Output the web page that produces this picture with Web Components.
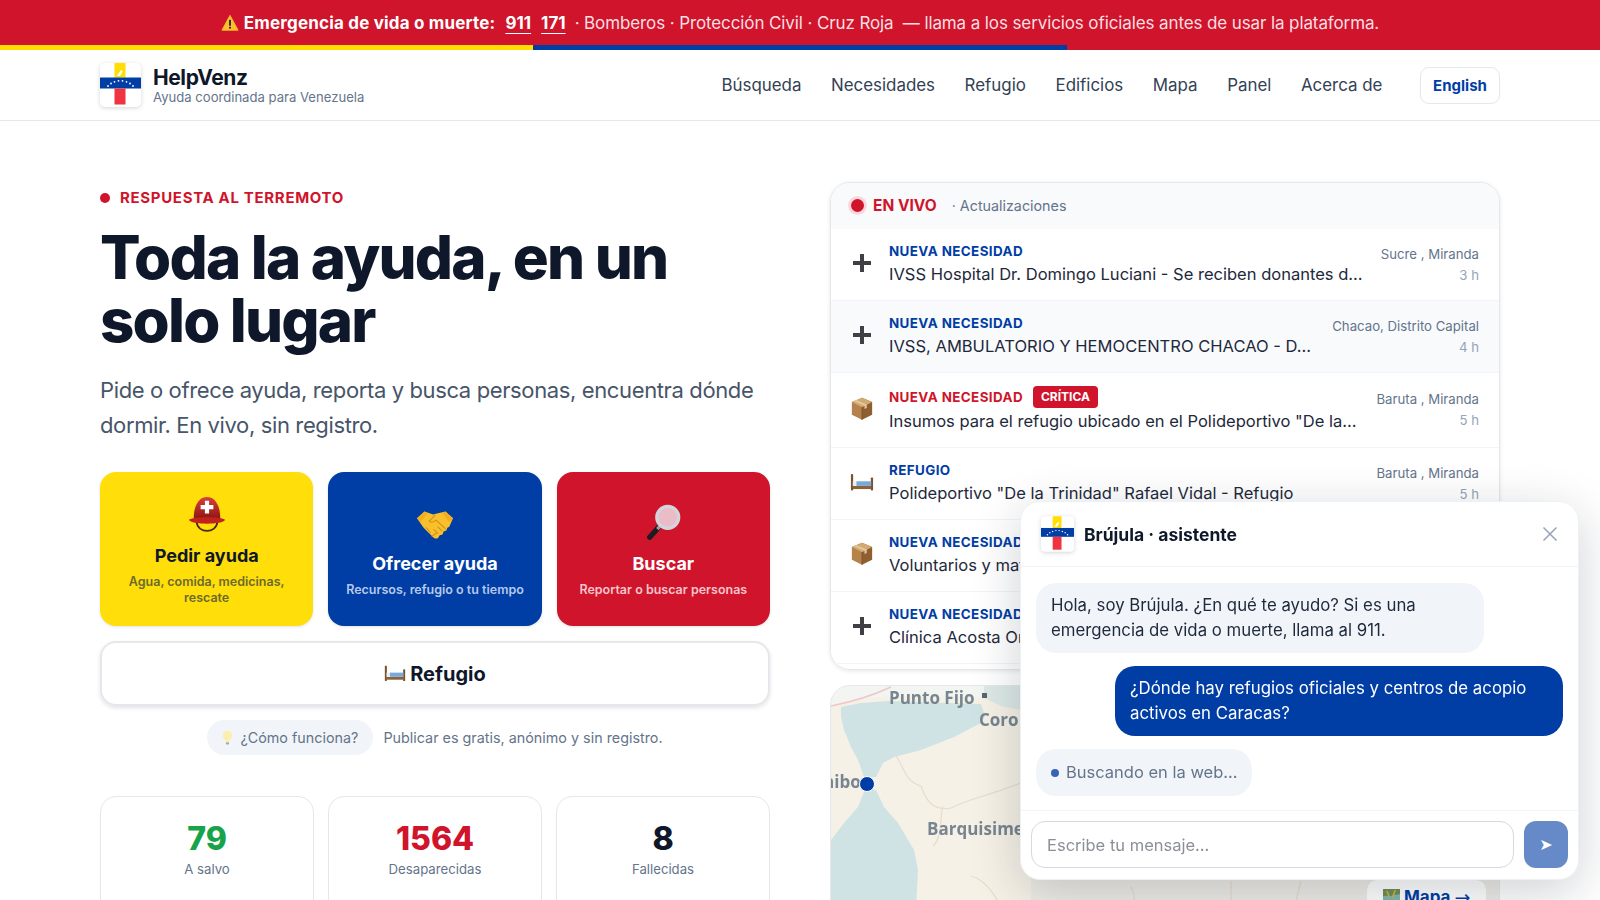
<!DOCTYPE html>
<html lang="es">
<head>
<meta charset="utf-8">
<title>HelpVenz</title>
<style>
  html, body { margin: 0; height: 100%; overflow: hidden; background: #fff; }
  body { font-family: Inter, "Liberation Sans", sans-serif; color: #0f172a; }
</style>
</head>
<body>
<sos-banner></sos-banner>
<site-header></site-header>
<hero-page>
  <hero-intro slot="left"></hero-intro>
  <live-feed slot="right">
    <feed-row icon="plus" label="NUEVA NECESIDAD" title="IVSS Hospital Dr. Domingo Luciani - Se reciben donantes d…" place="Sucre , Miranda" time="3 h"></feed-row>
    <feed-row icon="plus" shaded label="NUEVA NECESIDAD" title="IVSS, AMBULATORIO Y HEMOCENTRO CHACAO - D…" place="Chacao, Distrito Capital" time="4 h"></feed-row>
    <feed-row icon="box" critical label="NUEVA NECESIDAD" title="Insumos para el refugio ubicado en el Polideportivo &quot;De la…" place="Baruta , Miranda" time="5 h"></feed-row>
    <feed-row icon="bed" label="REFUGIO" title="Polideportivo &quot;De la Trinidad&quot; Rafael Vidal - Refugio" place="Baruta , Miranda" time="5 h"></feed-row>
    <feed-row icon="box" label="NUEVA NECESIDAD" title="Voluntarios y materiales" place="" time=""></feed-row>
    <feed-row icon="plus" label="NUEVA NECESIDAD" title="Clínica Acosta Ortiz" place="" time=""></feed-row>
  </live-feed>
  <map-card slot="right"></map-card>
</hero-page>
<chat-widget></chat-widget>

<script>
const ICONS = {
  warn: `<svg viewBox="0 0 20 20"><path d="M10 1.5 19 18H1Z" fill="#fbc02d" stroke="#fbc02d" stroke-linejoin="round"/><rect x="9" y="6.5" width="2" height="6.5" fill="#222"/><rect x="9" y="14.2" width="2" height="2" fill="#222"/></svg>`,
  helmet: `<svg viewBox="0 0 40 40"><defs><linearGradient id="h" x1="0" y1="0" x2="0" y2="1"><stop offset="0" stop-color="#d9413a"/><stop offset="1" stop-color="#8e1512"/></linearGradient></defs>
    <path d="M9 27c1 13 21 13 22 0" fill="none" stroke="#4a2c10" stroke-width="1.8"/>
    <path d="M6 24C6 9 12 1 20 1s14 8 14 23Z" fill="url(#h)"/>
    <path d="M1 25c3-3.500 35-3.500 38 0-2 5.500-36 5.500-38 0Z" fill="#c0231f"/>
    <path d="M17.800 5h4.400v4.500h4.500v4.400h-4.500v4.500h-4.400v-4.500h-4.500V9.500h4.500Z" fill="#fff"/></svg>`,
  hands: `<svg viewBox="0 0 40 40"><path d="M1 15 9 8l9 3 4-1 9-2 8 7-4 9-2 1-1 3-3 1-1 3-3 1-2 3c-2 1-4 0-5-1L8 25Z" fill="#f7c02c"/>
    <path d="M20 12l-6 6c2 2 5 1 7-1l10 9M17 34l5-4M23 31l-4-4M27 28l-4-4M11 25l4 5" fill="none" stroke="#d8901a" stroke-width="1.2" stroke-linecap="round"/>
    <path d="M1 15 9 8l3 2-7 9ZM39 15l-8-7-3 2 7 9Z" fill="#f3ae1e"/></svg>`,
  search: `<svg viewBox="0 0 40 40"><line x1="15" y1="25" x2="6" y2="35" stroke="#1d1d1f" stroke-width="5.500" stroke-linecap="round"/><line x1="19" y1="21" x2="14" y2="26.500" stroke="#9a9aa0" stroke-width="3.500"/>
    <circle cx="25" cy="14" r="11.500" fill="#e9bcc8" stroke="#d4d4db" stroke-width="3.500"/></svg>`,
  bed: `<svg viewBox="0 0 26 20"><rect x="1" y="1" width="2.400" height="18" rx=".8" fill="#7a5230"/><rect x="22.600" y="5" width="2.400" height="14" rx=".8" fill="#7a5230"/>
    <rect x="3" y="14" width="20" height="3.400" fill="#8d6238"/><path d="M3 9h5v5H3Z" fill="#e9eef2"/><path d="M7 9h16v5H7Z" fill="#7aa9d6"/></svg>`,
  box: `<svg viewBox="0 0 26 28"><path d="M13 1 25 6v15l-12 6Z" fill="#8f5f32"/><path d="M13 1 1 6v15l12 6Z" fill="#b5824b"/><path d="M1 6l12 6 12-6-12-5Z" fill="#d2a873"/>
    <path d="M13 12v15" stroke="#7b5028"/><path d="M6 3.600 18.600 9v4l-2.600 1.300V10.200L3.600 5Z" fill="#e3c79c"/></svg>`,
  plus: `<svg viewBox="0 0 18 18"><path d="M7 0h4v7h7v4h-7v7H7v-7H0V7h7Z" fill="#3f3f46"/></svg>`,
  bulb: `<svg viewBox="0 0 14 20"><path d="M7 1a6 6 0 0 0-3.400 10.900L5 15h4l1.400-3.100A6 6 0 0 0 7 1Z" fill="#fbeeb0"/><rect x="5" y="15.500" width="4" height="3" rx="1" fill="#a8a8a8"/></svg>`,
  map: `<svg viewBox="0 0 18 18"><rect width="18" height="18" fill="#7fb8b0"/><path d="M0 0h18v5c-3 2-5 0-8 2S4 6 0 8Z" fill="#6c8f57"/><path d="M4 2l3 7M13 1l-3 8" stroke="#d8b23a" stroke-width="1.600"/></svg>`
};

class AppIcon extends HTMLElement {
  connectedCallback() {
    const size = this.getAttribute("size") || 20;
    this.attachShadow({ mode: "open" }).innerHTML = `
      <style>
        :host { display: inline-flex; flex: none; width: ${size}px; }
        svg { display: block; width: 100%; height: auto; }
      </style>${ICONS[this.getAttribute("name")]}`;
  }
}
customElements.define("app-icon", AppIcon);

class BrandLogo extends HTMLElement {
  connectedCallback() {
    this.attachShadow({ mode: "open" }).innerHTML = `
      <style>
        :host { display: block; flex: none; width: var(--logo-w, 41px); height: var(--logo-h, 44px); }
        svg { display: block; width: 100%; height: 100%; filter: drop-shadow(0 1px 2px rgba(15,23,42,.18)); }
      </style>
      <svg viewBox="0 0 41 44">
        <rect width="41" height="44" rx="5" fill="#fff"/>
        <rect x="14.500" width="11" height="14.500" fill="#ffde00"/>
        <path d="M16.500 13c2-1 2-4 4.500-5.500 1-.6 2 .2 1.600 1-.8 1.500-1.600 3-2.600 4.500Z" fill="#fff"/>
        <rect y="14.500" width="41" height="11" fill="#003da5"/>
        <rect x="14.500" y="25.500" width="11" height="16" fill="#ef3340"/>
        <g fill="#fff"><circle cx="8" cy="23" r=".9"/><circle cx="11" cy="20.500" r=".9"/><circle cx="14.500" cy="18.800" r=".9"/><circle cx="18.500" cy="17.800" r=".9"/><circle cx="22.500" cy="17.800" r=".9"/><circle cx="26.500" cy="18.800" r=".9"/><circle cx="30" cy="20.500" r=".9"/><circle cx="33" cy="23" r=".9"/></g>
      </svg>`;
  }
}
customElements.define("brand-logo", BrandLogo);

class SosBanner extends HTMLElement {
  connectedCallback() {
    this.attachShadow({ mode: "open" }).innerHTML = `
      <style>
        :host { display: block; background: #cf142b; color: #fff; font-size: 17px; }
        .msg { height: 45px; display: flex; align-items: center; justify-content: center; white-space: nowrap; }
        app-icon { margin-right: 5px; }
        b { font-weight: 700; letter-spacing: .18px; }
        a { color: #fff; font-weight: 700; text-decoration: underline; text-underline-offset: 4px; margin-left: 10px; }
        .rest { color: #fbdfe2; margin-left: 9px; white-space: pre; letter-spacing: -.11px; }
        .stripe { display: flex; height: 5px; }
        .stripe i { flex: 1; }
      </style>
      <div class="msg">
        <app-icon name="warn" size="18"></app-icon>
        <b>Emergencia de vida o muerte:</b>
        <a>911</a><a>171</a>
        <span class="rest">· Bomberos · Protección Civil · Cruz Roja  — llama a los servicios oficiales antes de usar la plataforma.</span>
      </div>
      <div class="stripe"><i style="background:#ffde00"></i><i style="background:#003da5"></i><i></i></div>`;
  }
}
customElements.define("sos-banner", SosBanner);

class SiteHeader extends HTMLElement {
  connectedCallback() {
    const links = ["Búsqueda", "Necesidades", "Refugio", "Edificios", "Mapa", "Panel", "Acerca de"];
    this.attachShadow({ mode: "open" }).innerHTML = `
      <style>
        :host { display: block; border-bottom: 1px solid #e5e7eb; }
        .bar { height: 70px; width: 1400px; margin: 0 auto; display: flex; align-items: center; }
        .brand { display: flex; align-items: center; gap: 12px; }
        .name { font-size: 21px; font-weight: 700; line-height: 24px; letter-spacing: -.02em; color: #0f172a; margin-top: -1px; }
        .sub { font-size: 13.100px; line-height: 14px; color: #64748b; }
        nav { margin-left: auto; display: flex; align-items: center; gap: 29.600px; font-size: 16.900px; color: #334155; }
        button { margin-left: 8px; width: 80px; height: 37px; border: 1px solid #e5e7eb; border-radius: 9px; background: #fff; color: #003da5; font: 700 15px Inter, sans-serif; padding: 0; }
      </style>
      <div class="bar">
        <div class="brand">
          <brand-logo></brand-logo>
          <div><div class="name">HelpVenz</div><div class="sub">Ayuda coordinada para Venezuela</div></div>
        </div>
        <nav>${links.map(l => `<span>${l}</span>`).join("")}<button>English</button></nav>
      </div>`;
  }
}
customElements.define("site-header", SiteHeader);

class HeroPage extends HTMLElement {
  connectedCallback() {
    this.attachShadow({ mode: "open" }).innerHTML = `
      <style>
        :host { display: block; }
        .wrap { width: 1400px; margin: 0 auto; padding-top: 61px; display: grid; grid-template-columns: 670px 670px; gap: 60px; align-items: start; }
        .col { display: flex; flex-direction: column; gap: 15px; }
      </style>
      <div class="wrap">
        <div class="col"><slot name="left"></slot></div>
        <div class="col"><slot name="right"></slot></div>
      </div>`;
  }
}
customElements.define("hero-page", HeroPage);

class ActionCard extends HTMLElement {
  connectedCallback() {
    const a = n => this.getAttribute(n);
    this.attachShadow({ mode: "open" }).innerHTML = `
      <style>
        :host { display: flex; flex-direction: column; align-items: center; justify-content: center; height: 154px; padding: 3px 14px 0; box-sizing: border-box; border-radius: 16px; text-align: center; box-shadow: 0 1px 3px rgba(15,23,42,.12); background: ${a("bg")}; color: ${a("fg")}; }
        .t { font-size: 18px; font-weight: 700; line-height: 24px; margin: 10px 0 6px; }
        .s { font-size: 12.500px; font-weight: 600; line-height: 15.500px; color: ${a("muted")}; }
      </style>
      <app-icon name="${a("icon")}" size="38"></app-icon>
      <div class="t">${a("heading")}</div>
      <div class="s"><slot></slot></div>`;
  }
}
customElements.define("action-card", ActionCard);

class StatCard extends HTMLElement {
  connectedCallback() {
    this.attachShadow({ mode: "open" }).innerHTML = `
      <style>
        :host { display: block; height: 130px; padding-top: 23px; box-sizing: border-box; border: 1px solid #e5e7eb; border-radius: 16px; text-align: center; }
        .n { font-size: 32px; font-weight: 800; line-height: 38px; color: ${this.getAttribute("color")}; }
        .l { font-size: 13.200px; line-height: 20px; margin-top: 1px; color: #64748b; }
      </style>
      <div class="n">${this.getAttribute("value")}</div>
      <div class="l">${this.getAttribute("label")}</div>`;
  }
}
customElements.define("stat-card", StatCard);

class HeroIntro extends HTMLElement {
  connectedCallback() {
    this.attachShadow({ mode: "open" }).innerHTML = `
      <style>
        :host { display: block; }
        .eyebrow { display: flex; align-items: center; gap: 10px; margin-top: 7px; font-size: 15px; line-height: 18px; font-weight: 700; letter-spacing: .045em; color: #cf142b; }
        .eyebrow i { width: 10px; height: 10px; border-radius: 50%; background: #cf142b; }
        h1 { margin: 19px 0 0; font-size: 60px; line-height: 63px; font-weight: 800; letter-spacing: -.03em; color: #0f172a; }
        p { margin: 21px 0 0; font-size: 22px; line-height: 35px; letter-spacing: -.017em; color: #475569; }
        .actions { display: grid; grid-template-columns: repeat(3, 1fr); gap: 15px; margin-top: 29px; }
        .shelter { display: flex; align-items: center; justify-content: center; gap: 4px; height: 65px; margin-top: 15px; box-sizing: border-box; border: 2px solid #e5e7eb; border-radius: 16px; box-shadow: 0 2px 4px rgba(15,23,42,.12); font-size: 20px; font-weight: 700; color: #0f172a; }
        .help { display: flex; align-items: center; justify-content: center; gap: 10px; margin-top: 14px; font-size: 14.350px; color: #64748b; }
        .pill { display: flex; align-items: center; gap: 7px; height: 35px; padding: 0 15px; border-radius: 18px; background: #f1f5f9; }
        .stats { display: grid; grid-template-columns: repeat(3, 1fr); gap: 14px; margin-top: 41px; }
      </style>
      <div class="eyebrow"><i></i>RESPUESTA AL TERREMOTO</div>
      <h1>Toda la ayuda, en un solo lugar</h1>
      <p>Pide o ofrece ayuda, reporta y busca personas, encuentra dónde dormir. En vivo, sin registro.</p>
      <div class="actions">
        <action-card bg="#ffde0a" fg="#0f172a" muted="#6b6a2b" icon="helmet" heading="Pedir ayuda">Agua, comida, medicinas, rescate</action-card>
        <action-card bg="#003da5" fg="#fff" muted="#b6c9ec" icon="hands" heading="Ofrecer ayuda">Recursos, refugio o tu tiempo</action-card>
        <action-card bg="#cf142b" fg="#fff" muted="#f6c4cb" icon="search" heading="Buscar">Reportar o buscar personas</action-card>
      </div>
      <div class="shelter"><app-icon name="bed" size="22"></app-icon>Refugio</div>
      <div class="help"><span class="pill"><app-icon name="bulb" size="11"></app-icon>¿Cómo funciona?</span><span>Publicar es gratis, anónimo y sin registro.</span></div>
      <div class="stats">
        <stat-card value="79" label="A salvo" color="#16a34a"></stat-card>
        <stat-card value="1564" label="Desaparecidas" color="#cf142b"></stat-card>
        <stat-card value="8" label="Fallecidas" color="#0f172a"></stat-card>
      </div>`;
  }
}
customElements.define("hero-intro", HeroIntro);

class LiveFeed extends HTMLElement {
  connectedCallback() {
    this.attachShadow({ mode: "open" }).innerHTML = `
      <style>
        :host { display: block; height: 488px; box-sizing: border-box; overflow: hidden; border: 1px solid #e5e7eb; border-radius: 20px; box-shadow: 0 1px 4px rgba(15,23,42,.1); }
        header { display: flex; align-items: center; height: 44px; padding: 0 0 2px 18px; background: #f8fafc; font-size: 14.300px; color: #64748b; }
        .dot { width: 13px; height: 13px; margin: 0 9px 0 2px; border-radius: 50%; background: #cf142b; box-shadow: 0 0 0 3px #fad9de; }
        b { font-size: 15.500px; font-weight: 700; color: #cf142b; margin-right: 15px; }
      </style>
      <header><span class="dot"></span><b>EN VIVO</b>· Actualizaciones</header>
      <slot></slot>`;
  }
}
customElements.define("live-feed", LiveFeed);

class FeedRow extends HTMLElement {
  connectedCallback() {
    const a = n => this.getAttribute(n) || "";
    const critical = this.hasAttribute("critical");
    const iconSize = { plus: 18, box: 22, bed: 24 }[a("icon")];
    this.attachShadow({ mode: "open" }).innerHTML = `
      <style>
        :host { display: grid; grid-template-columns: 24px minmax(0, 1fr) auto; column-gap: 15px; align-items: center; padding: 12.500px 20px 13.500px 19px; border-bottom: 1px solid #f1f5f9; background: ${this.hasAttribute("shaded") ? "#f8fafc" : "#fff"}; }
        .icon { display: flex; justify-content: center; margin-top: -2px; }
        .label { display: flex; align-items: center; gap: 10px; min-height: 19px; font-size: 13.400px; font-weight: 700; letter-spacing: .03em; color: ${critical ? "#cf142b" : "#003da5"}; }
        .badge { height: 22px; line-height: 22px; padding: 0 8px; border-radius: 4px; background: #cf142b; color: #fff; font-size: 12px; letter-spacing: 0; }
        .title { margin-top: 1px; font-size: 16.550px; line-height: 25px; white-space: nowrap; color: #1e293b; }
        .meta { text-align: right; font-size: 13.200px; line-height: 20px; color: #64748b; white-space: nowrap; }
        .meta div + div { color: #94a3b8; margin-top: 1px; }
      </style>
      <div class="icon"><app-icon name="${a("icon")}" size="${iconSize}"></app-icon></div>
      <div>
        <div class="label">${a("label")}${critical ? `<span class="badge">CRÍTICA</span>` : ""}</div>
        <div class="title">${a("title")}</div>
      </div>
      <div class="meta"><div>${a("place")}</div><div>${a("time")}</div></div>`;
  }
}
customElements.define("feed-row", FeedRow);

class MapCard extends HTMLElement {
  connectedCallback() {
    this.attachShadow({ mode: "open" }).innerHTML = `
      <style>
        :host { display: block; position: relative; height: 260px; overflow: hidden; border: 1px solid #e5e7eb; border-radius: 20px; background: #f5f0e5; }
        svg { display: block; width: 670px; height: 260px; filter: blur(.5px); }
        text { font-family: "Open Sans", sans-serif; font-weight: 700; fill: #76858f; font-size: 17px; }
        .pin { position: absolute; left: 28px; top: 90px; width: 14px; height: 14px; border-radius: 50%; background: #003da5; border: 1px solid #fff; }
        .btn { position: absolute; left: 536px; top: 194px; display: flex; gap: 4px; align-items: center; height: 34px; padding: 0 16px; border-radius: 10px; background: #fff; color: #003da5; font-size: 17px; font-weight: 700; white-space: nowrap; }
        .btn i { font: 400 19px "DejaVu Sans", sans-serif; }
      </style>
      <svg viewBox="0 0 670 260">
        <path d="M0 0H670V260H0Z" fill="#f6f1e6"/>
        <path d="M200 0H670V260H200Z" fill="#eeece6"/>
        <path d="M0 0H200V16C170 12 140 10 110 11 70 8 30 10 0 20Z" fill="#f3f5f2"/>
        <path d="M10 21 30 17 57 15 90 16 117 17 150 18 154 30 150 37 123 51 90 64 63 71 52 77 45 91H33L27 74 20 61 13 44 10 31Z" fill="#cfe2e4"/>
        <path d="M153 0H200V26L170 20 153 12Z" fill="#dce9e6"/>
        <path d="M35 101 45 104 53 121 67 137 83 164 87 184 83 260H0V154L13 137 27 121Z" fill="#cfe2e4"/>
        <path d="M0 20C30 14 45 8 60 1" fill="none" stroke="#f0c6c6" stroke-width="1.500"/>
        <path d="M65 70c8 10 8 25 25 30 5 15 12 25 30 22 15-8 30-10 70-25M112 120c-4 15 0 30-10 40M140 190c20 5 30 30 50 70M300 200c10 20-5 40 10 60M400 195v30h40M470 195l-10 40" fill="none" stroke="#e6dccb" stroke-width="1.200"/>
        <text x="58" y="18">Punto Fijo</text>
        <rect x="151" y="7" width="5" height="5" fill="#5b6470"/>
        <text x="148" y="40">Coro</text>
        <text x="-60" y="102">Maracaibo</text>
        <text x="96" y="149">Barquisimeto</text>
      </svg>
      <span class="pin"></span>
      <span class="btn"><app-icon name="map" size="17"></app-icon>Mapa <i>→</i></span>`;
  }
}
customElements.define("map-card", MapCard);

class ChatWidget extends HTMLElement {
  connectedCallback() {
    this.attachShadow({ mode: "open" }).innerHTML = `
      <style>
        :host { position: fixed; left: 1020px; top: 501px; width: 559px; height: 379px; display: flex; flex-direction: column; box-sizing: border-box; background: #fff; border-radius: 20px; border: 1px solid #eef0f3; box-shadow: 0 12px 50px rgba(15,23,42,.2); font-size: 16.800px; line-height: 25px; }
        header { display: flex; align-items: center; gap: 10px; height: 64px; flex: none; padding: 0 20px; border-bottom: 1px solid #f1f5f9; font-size: 17.500px; font-weight: 700; color: #0f172a; --logo-w: 33px; --logo-h: 36px; }
        .close { margin-left: auto; display: block; }
        .msgs { flex: 1; display: flex; flex-direction: column; gap: 13px; padding: 16px 15px 0; align-items: flex-start; }
        .bubble { box-sizing: border-box; width: 448px; padding: 10px 15px; border-radius: 20px; background: #f1f5f9; color: #1e293b; }
        .me { align-self: flex-end; background: #003da5; color: #fff; }
        .busy { width: auto; display: flex; align-items: center; gap: 7px; padding: 11px 14px 11px 15px; font-size: 16.500px; color: #64748b; }
        .busy i { width: 8px; height: 8px; border-radius: 50%; background: #3563b5; }
        footer { flex: none; display: flex; gap: 10px; padding: 10px 10px 11px; border-top: 1px solid #f1f5f9; }
        input { flex: 1; height: 47px; box-sizing: border-box; padding: 0 15px; border: 1.500px solid #d5d9e0; border-radius: 14px; font: 16.500px Inter, sans-serif; outline: none; }
        input::placeholder { color: #8b8f97; }
        button { width: 44px; height: 47px; padding: 0; border: 0; border-radius: 12px; background: #668ac8; color: #fff; font-size: 16px; font-family: "DejaVu Sans", sans-serif; }
      </style>
      <header>
        <brand-logo></brand-logo>
        Brújula · asistente
        <svg class="close" width="16" height="16" viewBox="0 0 16 16"><path d="M1.500 1.500l13 13M14.500 1.500l-13 13" stroke="#94a3b8" stroke-width="1.500" fill="none"/></svg>
      </header>
      <div class="msgs">
        <div class="bubble">Hola, soy Brújula. ¿En qué te ayudo? Si es una emergencia de vida o muerte, llama al 911.</div>
        <div class="bubble me">¿Dónde hay refugios oficiales y centros de acopio activos en Caracas?</div>
        <div class="bubble busy"><i></i>Buscando en la web…</div>
      </div>
      <footer>
        <input placeholder="Escribe tu mensaje…">
        <button>➤</button>
      </footer>`;
  }
}
customElements.define("chat-widget", ChatWidget);
</script>
</body>
</html>
